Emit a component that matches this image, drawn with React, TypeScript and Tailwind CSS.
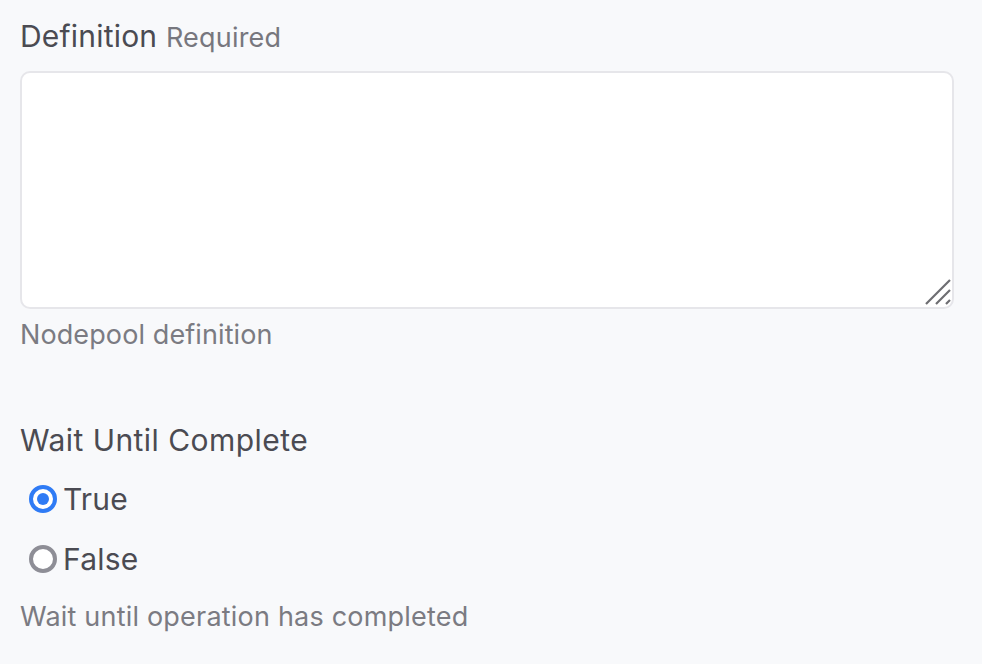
export default function App() {
  return (
    <div
      className="min-h-screen w-full bg-[#f8f9fb] pl-[20px] pr-[28px] pt-[18px] text-[#4b4b52]"
      style={{ fontFamily: "Inter, 'Noto Sans', sans-serif" }}
    >
      {/* Definition field */}
      <label className="block text-[30px] leading-[36px] tracking-[0.2px]">
        Definition <span className="text-[27px] tracking-[0.2px] text-[#77777e]">Required</span>
      </label>
      <div className="relative mt-[15px] h-[238px] w-full">
        <textarea className="h-full w-full resize-none rounded-[10px] border-2 border-[#e6e6ea] bg-white p-3 outline-none" />
        {/* resize grip */}
        <svg
          className="pointer-events-none absolute bottom-[4px] right-[3px]"
          width="26"
          height="26"
          viewBox="0 0 26 26"
        >
          <path
            d="M1 25 L25 1 M11 25 L25 11 M21 25 L25 21"
            stroke="#6e6e72"
            strokeWidth="2.2"
          />
        </svg>
      </div>
      <p className="mt-[10px] text-[27px] leading-[32px] tracking-[0.1px] text-[#7b7b82]">Nodepool definition</p>

      {/* Wait Until Complete */}
      <div className="mt-[71px] text-[30px] leading-[36px] tracking-[0.45px]">Wait Until Complete</div>
      <div className="mt-[11px]">
        <label className="flex h-[60px] items-center pl-[9px]">
          <span className="flex h-[28px] w-[28px] items-center justify-center rounded-full border-[4px] border-[#2f7bf5] bg-white">
            <span className="h-[12px] w-[12px] rounded-full bg-[#2f7bf5]" />
          </span>
          <span className="ml-[6px] text-[30px] leading-[36px] tracking-[0.2px]">True</span>
        </label>
        <label className="flex h-[60px] items-center pl-[9px]">
          <span className="h-[28px] w-[28px] rounded-full border-[4px] border-[#8e8e96] bg-white" />
          <span className="ml-[6px] text-[30px] leading-[36px] tracking-[0.2px]">False</span>
        </label>
      </div>
      <p className="mt-[12px] text-[27px] leading-[32px] tracking-[0.2px] text-[#7b7b82]">
        Wait until operation has completed
      </p>
    </div>
  );
}
